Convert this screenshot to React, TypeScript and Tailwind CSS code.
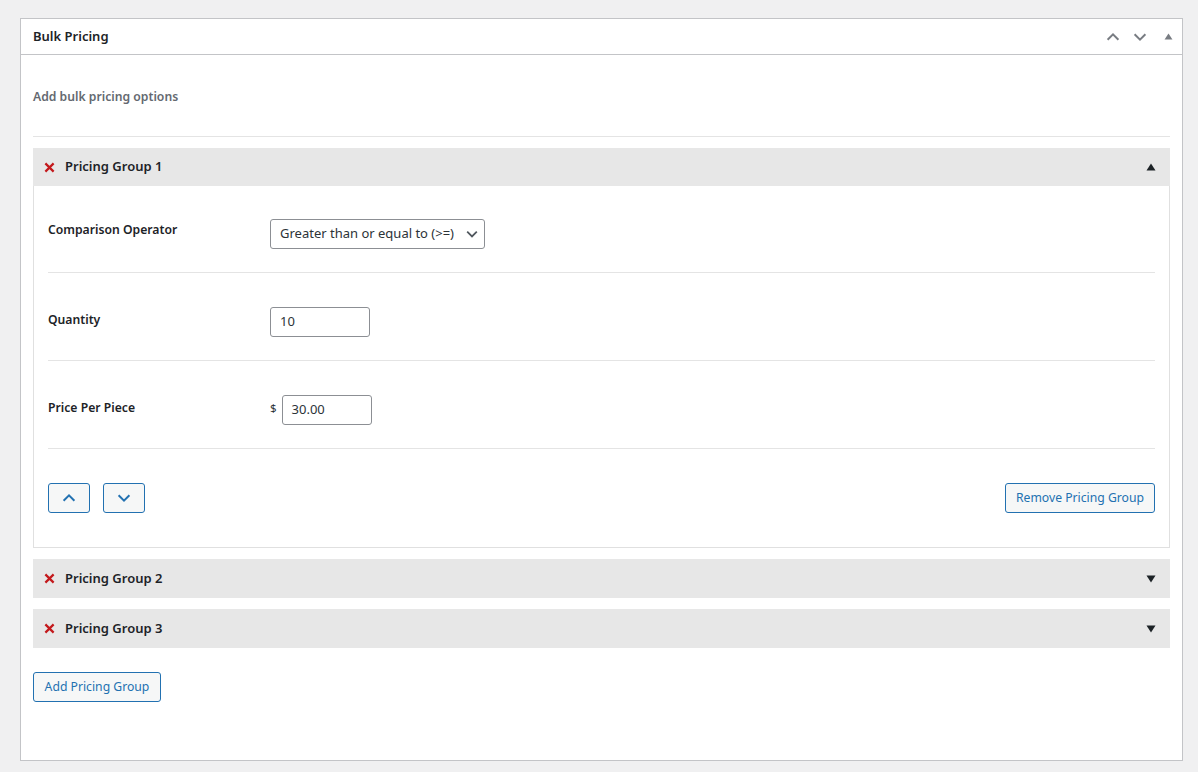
import React from 'react';

const font = { fontFamily: '"Segoe UI", "Noto Sans", "Open Sans", sans-serif' };

const ChevronUp = ({ className = '' }: { className?: string }) => (
  <svg viewBox="0 0 20 20" className={className} fill="none" stroke="currentColor" strokeWidth="2.2">
    <path d="M4 13l6-6 6 6" />
  </svg>
);

const ChevronDown = ({ className = '' }: { className?: string }) => (
  <svg viewBox="0 0 20 20" className={className} fill="none" stroke="currentColor" strokeWidth="2.2">
    <path d="M4 7l6 6 6-6" />
  </svg>
);

const Tri = ({ up, className = '' }: { up?: boolean; className?: string }) => (
  <svg viewBox="0 0 10 8" className={className} fill="currentColor">
    {up ? <path d="M5 0.5L9.5 7.5H0.5Z" /> : <path d="M0.5 0.5H9.5L5 7.5Z" />}
  </svg>
);

const RedX = () => (
  <svg viewBox="0 0 12 12" className="w-[11px] h-[11px] text-[#c3191c]" stroke="currentColor" strokeWidth="2.4">
    <path d="M1.5 1.5l9 9M10.5 1.5l-9 9" />
  </svg>
);

const GroupHeader = ({ title, open }: { title: string; open?: boolean }) => (
  <div className={`flex items-center ${open ? 'h-[38px]' : 'h-[39px]'} bg-[#e7e7e7] pl-[11px] pr-[14px]`}>
    <RedX />
    <span className="ml-[10px] text-[13px] font-semibold text-[#1d2327]">{title}</span>
    <Tri up={open} className="ml-auto w-[10px] h-[8px] text-[#1d2327]" />
  </div>
);

const Row = ({ label, first, children }: { label: string; first?: boolean; children: React.ReactNode }) => (
  <div className={`flex items-start ${first ? 'pt-[33px]' : 'pt-[34px]'} pb-[23px] border-b border-[#e4e4e4]`}>
    <div
      className={`w-[222px] ${first ? 'pt-[1px]' : 'pt-[3px]'} leading-[20px] text-[12.2px] font-semibold text-[#1d2327]`}
    >
      {label}
    </div>
    {children}
  </div>
);

const btn = 'border border-[#2271b1] rounded-[3px] bg-[#f6f7f7] text-[#2271b1]';
const field = 'flex items-center h-[30px] border border-[#8c8f94] rounded-[3px] text-[13px] text-[#2c3338]';

export default function App() {
  return (
    <div className="min-h-screen bg-[#f0f0f1] pt-[18px] pl-[20px] pr-[15px]" style={font}>
      <div className="bg-white border border-[#c3c4c7] h-[743px]">
        {/* Panel header */}
        <div className="flex items-center h-[36px] border-b border-[#c3c4c7] pl-[12px] pr-[9px]">
          <h2 className="text-[13px] font-semibold text-[#1d2327]">Bulk Pricing</h2>
          <div className="ml-auto flex items-center gap-[9px] text-[#787c82]">
            <ChevronUp className="w-[18px] h-[18px]" />
            <ChevronDown className="w-[18px] h-[18px]" />
            <Tri up className="ml-[6px] w-[9px] h-[7px]" />
          </div>
        </div>

        <div className="px-[12px]">
          <p className="pt-[32px] pb-[29px] text-[12.2px] font-semibold text-[#646970] leading-[20px] border-b border-[#e4e4e4]">
            Add bulk pricing options
          </p>

          <div className="mt-[11px]">
            <GroupHeader title="Pricing Group 1" open />
            <div className="border border-t-0 border-[#e0e0e0] px-[14px]">
              <Row label="Comparison Operator" first>
                <div className={`${field} w-[215px] pl-[9px] pr-[4px]`}>
                  <span>Greater than or equal to (&gt;=)</span>
                  <ChevronDown className="ml-auto w-[16px] h-[16px] text-[#50575e]" />
                </div>
              </Row>
              <Row label="Quantity">
                <div className={`${field} w-[100px] px-[9px]`}>10</div>
              </Row>
              <Row label="Price Per Piece">
                <div className="flex items-start">
                  <span className="pt-[4px] text-[11.5px] text-[#2c3338] mr-[5px]">$</span>
                  <div className={`${field} w-[90px] px-[9px]`}>30.00</div>
                </div>
              </Row>
              <div className="flex items-center pt-[34px] pb-[34px]">
                <button className={`flex items-center justify-center w-[42px] h-[30px] ${btn}`}>
                  <ChevronUp className="w-[18px] h-[18px]" />
                </button>
                <button className={`ml-[13px] flex items-center justify-center w-[42px] h-[30px] ${btn}`}>
                  <ChevronDown className="w-[18px] h-[18px]" />
                </button>
                <button className={`ml-auto h-[30px] w-[150px] text-[12.2px] ${btn}`}>Remove Pricing Group</button>
              </div>
            </div>
          </div>

          <div className="mt-[11px]">
            <GroupHeader title="Pricing Group 2" />
          </div>
          <div className="mt-[11px]">
            <GroupHeader title="Pricing Group 3" />
          </div>

          <button className={`mt-[24px] h-[30px] w-[128px] text-[12.2px] ${btn}`}>Add Pricing Group</button>
        </div>
      </div>
    </div>
  );
}
